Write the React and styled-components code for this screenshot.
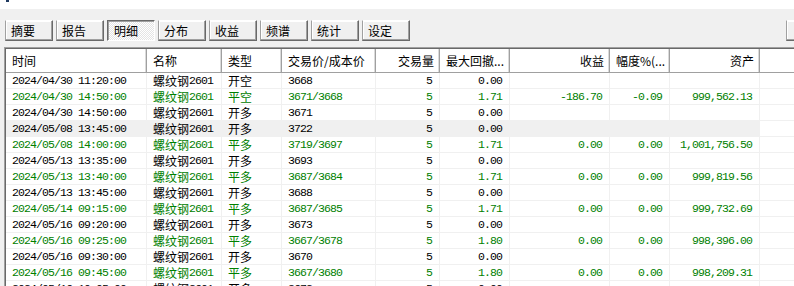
import React from 'react';
import styled, { createGlobalStyle, css } from 'styled-components';

const GREEN = '#008000';
const COLS = '141px 75px 60px 94px 64px 70px 100px 60px 90px 1fr';

const GlobalStyle = createGlobalStyle`
  html, body {
    margin: 0;
    padding: 0;
    overflow: hidden;
    background: #f0f0f0;
  }
  body {
    font-family: "Noto Sans CJK SC", sans-serif;
    font-size: 12px;
    color: #000;
  }
`;

const Page = styled.div`
  width: 794px;
  height: 286px;
  overflow: hidden;
  display: flex;
  flex-direction: column;
`;

const TopStrip = styled.div`
  height: 9px;
  flex-shrink: 0;
  background: #fff;
  padding-left: 6px;
  box-sizing: border-box;
`;

const Mark = styled.div`
  width: 3px;
  height: 2px;
  background: #203a60;
`;

const Toolbar = styled.div`
  height: 38px;
  flex-shrink: 0;
  box-sizing: border-box;
  padding: 11px 0 0 5px;
  display: flex;
  gap: 3px;
  align-items: flex-start;
  overflow: hidden;
`;

const Tab = styled.div`
  width: 48px;
  height: 21px;
  flex-shrink: 0;
  box-sizing: border-box;
  padding-left: 5px;
  line-height: 19px;
  border: 1px solid;
  border-color: #fff #696969 #696969 #a0a0a0;
  box-shadow: inset -1px -1px #a0a0a0, inset 1px 1px #fff;
  background: #f0f0f0;
  ${p => p.$pressed && css`
    padding-left: 6px;
    line-height: 20px;
    border-color: #696969 #fff #fff #696969;
    box-shadow: inset 1px 1px #a0a0a0;
    background: repeating-conic-gradient(#ffffff 0 25%, #e4e4e4 0 50%) 0 0 / 2px 2px;
  `}
`;

const EdgeButton = styled(Tab)`
  margin-left: auto;
  margin-right: -32px;
  width: 40px;
`;

const Frame = styled.div`
  flex: 1;
  width: 830px;
  margin-left: 4px;
  border-top: 1px solid #a0a0a0;
  border-left: 1px solid #a0a0a0;
  box-shadow: inset 1px 1px #696969;
  padding: 1px 0 0 1px;
  background: #fff;
  overflow: hidden;
`;

const HeadRow = styled.div`
  display: grid;
  grid-template-columns: ${COLS};
  height: 24px;
  border-bottom: 1px solid #a0a0a0;
  box-sizing: border-box;
`;

const HeadCell = styled.div`
  display: flex;
  align-items: center;
  justify-content: ${p => (p.$right ? 'flex-end' : 'flex-start')};
  padding: 0 6px;
  white-space: nowrap;
  overflow: hidden;
  ${p => !p.$last && css`
    box-shadow: inset -1px 0 #a0a0a0, inset -2px 0 #dadada;
  `}
`;

const Row = styled.div`
  display: grid;
  grid-template-columns: ${COLS};
  height: 16px;
  color: ${p => (p.$green ? GREEN : '#000')};
`;

const Cell = styled.div`
  display: flex;
  align-items: center;
  justify-content: ${p => (p.$right ? 'flex-end' : 'flex-start')};
  padding: 0 ${p => (p.$right ? '7px' : '6px')};
  line-height: 15px;
  white-space: nowrap;
  overflow: hidden;
  border-bottom: 1px solid #f0f0f0;
  border-right: ${p => (p.$last ? 'none' : '1px solid #f0f0f0')};
  background: ${p => (p.$selected && !p.$last ? '#f0f0f0' : 'transparent')};
`;

const Num = styled.span`
  font-family: "Liberation Mono", monospace;
  font-size: 11.5px;
  letter-spacing: -0.9px;
`;

const TABS = ['摘要', '报告', '明细', '分布', '收益', '频谱', '统计', '设定'];

const HEADERS = [
  ['时间'], ['名称'], ['类型'], ['交易价/成本价'], ['交易量', true],
  ['最大回撤...'], ['收益', true], ['幅度%(...'], ['资产', true], [''],
];

const ROWS = [
  ['2024/04/30 11:20:00', '开空', '3668'],
  ['2024/04/30 14:50:00', '平空', '3671/3668', '1.71', '-186.70', '-0.09', '999,562.13'],
  ['2024/04/30 14:50:00', '开多', '3671'],
  ['2024/05/08 13:45:00', '开多', '3722'],
  ['2024/05/08 14:00:00', '平多', '3719/3697', '1.71', '0.00', '0.00', '1,001,756.50'],
  ['2024/05/13 13:35:00', '开多', '3693'],
  ['2024/05/13 13:40:00', '平多', '3687/3684', '1.71', '0.00', '0.00', '999,819.56'],
  ['2024/05/13 13:45:00', '开多', '3688'],
  ['2024/05/14 09:15:00', '平多', '3687/3685', '1.71', '0.00', '0.00', '999,732.69'],
  ['2024/05/16 09:20:00', '开多', '3673'],
  ['2024/05/16 09:25:00', '平多', '3667/3678', '1.80', '0.00', '0.00', '998,396.00'],
  ['2024/05/16 09:30:00', '开多', '3670'],
  ['2024/05/16 09:45:00', '平多', '3667/3680', '1.80', '0.00', '0.00', '998,209.31'],
  ['2024/05/16 10:05:00', '开多', '3672'],
];

const DataRow = ({ row, selected }) => {
  const [time, type, price, dd = '0.00', profit = '', pct = '', asset = ''] = row;
  const closing = type.startsWith('平');
  return (
    <Row $green={closing}>
      <Cell $selected={selected}><Num>{time}</Num></Cell>
      <Cell $selected={selected}>螺纹钢<Num>2601</Num></Cell>
      <Cell $selected={selected}>{type}</Cell>
      <Cell $selected={selected}><Num>{price}</Num></Cell>
      <Cell $selected={selected} $right><Num>5</Num></Cell>
      <Cell $selected={selected} $right><Num>{dd}</Num></Cell>
      <Cell $selected={selected} $right><Num>{profit}</Num></Cell>
      <Cell $selected={selected} $right><Num>{pct}</Num></Cell>
      <Cell $selected={selected} $right><Num>{asset}</Num></Cell>
      <Cell $selected={selected} $last />
    </Row>
  );
};

export default function App() {
  return (
    <Page>
      <GlobalStyle />
      <TopStrip><Mark /></TopStrip>
      <Toolbar>
        {TABS.map(t => (
          <Tab key={t} $pressed={t === '明细'}>{t}</Tab>
        ))}
        <EdgeButton />
      </Toolbar>
      <Frame>
        <HeadRow>
          {HEADERS.map(([label, right], i) => (
            <HeadCell key={i} $right={right} $last={i === HEADERS.length - 1}>{label}</HeadCell>
          ))}
        </HeadRow>
        {ROWS.map((r, i) => (
          <DataRow key={i} row={r} selected={i === 3} />
        ))}
      </Frame>
    </Page>
  );
}
